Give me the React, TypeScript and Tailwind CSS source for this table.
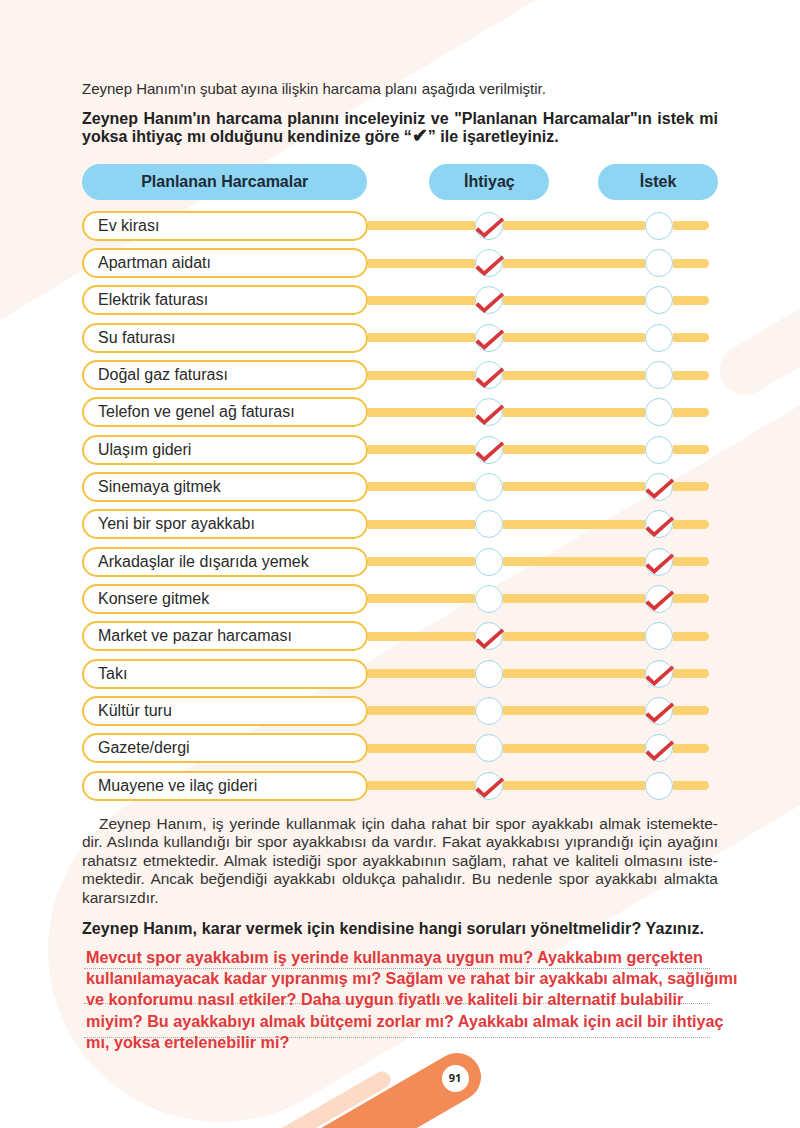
import React from "react";

type Kind = "i" | "s";

const rows: [string, Kind][] = [
  ["Ev kirası", "i"],
  ["Apartman aidatı", "i"],
  ["Elektrik faturası", "i"],
  ["Su faturası", "i"],
  ["Doğal gaz faturası", "i"],
  ["Telefon ve genel ağ faturası", "i"],
  ["Ulaşım gideri", "i"],
  ["Sinemaya gitmek", "s"],
  ["Yeni bir spor ayakkabı", "s"],
  ["Arkadaşlar ile dışarıda yemek", "s"],
  ["Konsere gitmek", "s"],
  ["Market ve pazar harcaması", "i"],
  ["Takı", "s"],
  ["Kültür turu", "s"],
  ["Gazete/dergi", "s"],
  ["Muayene ve ilaç gideri", "i"],
];

function Check() {
  return (
    <svg
      className="absolute left-[-1.5px] top-[-1.5px] w-[28px] h-[28px] overflow-visible"
      viewBox="0 0 28 28"
    >
      <path
        d="M0.4 19.2 L3.2 16.2 L9.1 22.0 L26.8 6.6 L29.1 9.3 L9.3 27.0 Z"
        fill="#d7363a"
      />
    </svg>
  );
}

function Circle({ checked }: { checked: boolean }) {
  return (
    <div className="relative w-[28px] h-[28px] shrink-0 rounded-full border-[1.5px] border-[#a3d6ea] bg-white">
      {checked && <Check />}
    </div>
  );
}

function Row({ label, kind }: { label: string; kind: Kind }) {
  return (
    <div className="flex items-center h-[30px]">
      <div className="w-[286px] h-[30px] shrink-0 rounded-full border-[2.5px] border-[#f5c142] bg-white flex items-center pl-[14px] text-[16px] text-[#2a2a2a]">
        {label}
      </div>
      <div className="w-[107px] h-[9px] bg-[#fcd171]" />
      <Circle checked={kind === "i"} />
      <div className="w-[142px] h-[9px] bg-[#fcd171]" />
      <Circle checked={kind === "s"} />
      <div className="w-[36px] h-[9px] bg-[#fcd171] rounded-r-full" />
    </div>
  );
}

function JLine({ children, className = "" }: { children: React.ReactNode; className?: string }) {
  return <div className={"text-justify [text-align-last:justify] " + className}>{children}</div>;
}

export default function App() {
  return (
    <div className="relative w-[800px] h-[1128px] overflow-hidden bg-white font-['Liberation_Sans',Arial,sans-serif]">
      <svg className="absolute inset-0" width="800" height="1128" viewBox="0 0 800 1128">
        <polygon points="0,0 536,0 0,320" fill="#fdf4ef" />
        <line x1="220" y1="950" x2="1300" y2="308" stroke="#fdf4ef" strokeWidth="344" strokeLinecap="round" />
        <line x1="745" y1="370" x2="1100" y2="159" stroke="#fdf4ef" strokeWidth="50" strokeLinecap="round" />
        <line x1="382" y1="1080" x2="150" y2="1214" stroke="#fcdac6" strokeWidth="17" strokeLinecap="round" />
        <line x1="457" y1="1077" x2="250" y2="1197" stroke="#f28b56" strokeWidth="48" strokeLinecap="round" />
      </svg>

      <div className="relative w-[718px] pl-[82px] pt-[79px] text-[#2e2e2e]">
        <div className="text-[15px] leading-[19px]">
          Zeynep Hanım'ın şubat ayına ilişkin harcama planı aşağıda verilmiştir.
        </div>

        <div className="mt-[12px] text-[16px] leading-[18px] font-bold text-[#222]">
          <JLine>Zeynep Hanım'ın harcama planını inceleyiniz ve "Planlanan Harcamalar"ın istek mi</JLine>
          <div className="h-[18px]">
            yoksa ihtiyaç mı olduğunu kendinize göre “<span className="text-[19px] leading-[0]">✔</span>” ile işaretleyiniz.
          </div>
        </div>

        <div className="mt-[18px] flex h-[36px] text-[16px] font-bold text-[#1f2b36]">
          <div className="w-[286px] rounded-full bg-[#8dd5f2] flex items-center justify-center">
            Planlanan Harcamalar
          </div>
          <div className="ml-[62px] w-[120px] rounded-full bg-[#8dd5f2] flex items-center justify-center">
            İhtiyaç
          </div>
          <div className="ml-[49px] w-[120px] rounded-full bg-[#8dd5f2] flex items-center justify-center">
            İstek
          </div>
        </div>

        <div className="mt-[10.7px] flex flex-col gap-[7.33px]">
          {rows.map(([l, k]) => (
            <Row key={l} label={l} kind={k} />
          ))}
        </div>

        <div className="mt-[14px] text-[15.5px] leading-[18.6px] text-[#333]">
          <JLine className="indent-[17px]">
            Zeynep Hanım, iş yerinde kullanmak için daha rahat bir spor ayakkabı almak istemekte-
          </JLine>
          <JLine>
            dir. Aslında kullandığı bir spor ayakkabısı da vardır. Fakat ayakkabısı yıprandığı için ayağını
          </JLine>
          <JLine>
            rahatsız etmektedir. Almak istediği spor ayakkabının sağlam, rahat ve kaliteli olmasını iste-
          </JLine>
          <JLine>
            mektedir. Ancak beğendiği ayakkabı oldukça pahalıdır. Bu nedenle spor ayakkabı almakta
          </JLine>
          <div>kararsızdır.</div>
        </div>

        <div className="mt-[11.5px] text-[16px] leading-[19px] font-bold tracking-[0.1px] text-[#222]">
          Zeynep Hanım, karar vermek için kendisine hangi soruları yöneltmelidir? Yazınız.
        </div>

        <div className="relative mt-[9px]">
          <div className="absolute left-[2px] top-[21px] w-[626px] border-t border-dotted border-[#a8a8a8]" />
          <div className="absolute left-[2px] top-[56px] w-[626px] border-t border-dotted border-[#a8a8a8]" />
          <div className="absolute left-[2px] top-[90px] w-[626px] border-t border-dotted border-[#a8a8a8]" />
          <div className="relative pl-[4px] text-[16.2px] leading-[21.2px] font-bold text-[#e03a3d] whitespace-nowrap">
            <div>Mevcut spor ayakkabım iş yerinde kullanmaya uygun mu? Ayakkabım gerçekten</div>
            <div>kullanılamayacak kadar yıpranmış mı? Sağlam ve rahat bir ayakkabı almak, sağlığımı</div>
            <div>ve konforumu nasıl etkiler? Daha uygun fiyatlı ve kaliteli bir alternatif bulabilir</div>
            <div>miyim? Bu ayakkabıyı almak bütçemi zorlar mı? Ayakkabı almak için acil bir ihtiyaç</div>
            <div>mı, yoksa ertelenebilir mi?</div>
          </div>
        </div>
      </div>

      <div className="absolute left-[441.5px] top-[1064.5px] w-[27px] h-[27px] rounded-full bg-white flex items-center justify-center font-['Open_Sans',sans-serif] text-[11px] font-bold text-[#222]">
        91
      </div>
    </div>
  );
}
